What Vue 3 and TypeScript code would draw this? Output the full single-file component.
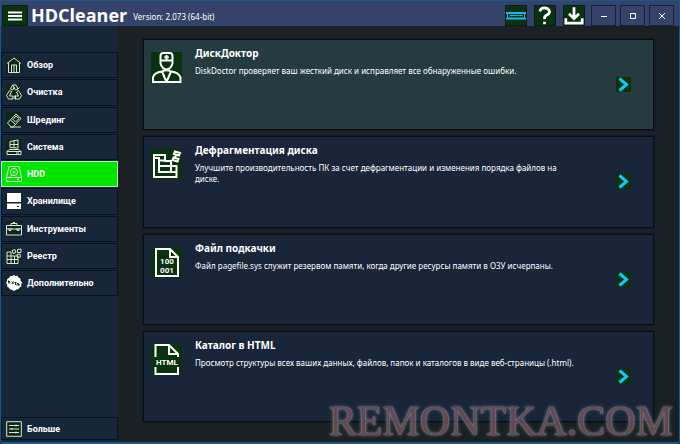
<script setup lang="ts">
import { ref } from 'vue'

interface Shape {
  d: string
  solid?: boolean
  cut?: boolean
}

interface NavItem {
  id: string
  label: string
  icon: Shape[]
}

interface Tool {
  title: string
  text: string
  icon: Shape[]
  caption?: string[]
}

const navItems: NavItem[] = [
  { id: 'overview', label: 'Обзор', icon: [{ d: 'M1 6.500 8 1l7 5.500M2.500 6v9.500h11V6M5.500 15V8h5v7M8 8v7' }] },
  {
    id: 'clean',
    label: 'Очистка',
    icon: [
      { d: 'M4.500 5 6.500 1h3.500l2 4-2.500 1L8 3.500 6.800 6ZM6.500 1l2 3M12 5l1.500-1.500M12.500 6.500l3 5-2 3.500H9.500v-3h3L10.500 8ZM3.500 6.500l2 1-2 4.500H7v3H2.500L.5 11.500ZM9.500 11l-1.500 2.500 1.500 2' },
    ],
  },
  { id: 'shred', label: 'Шрединг', icon: [{ d: 'M1.500 11 10 2l5 4.500L7 15H5ZM4.500 8l5 4.500M4 15h11' }, { d: 'M10 4l3 2.500L9.500 10 7 7.500Z' }] },
  { id: 'system', label: 'Система', icon: [{ d: 'M4 2.500 12 1v8L4 8.500ZM8 1.500v7.500M4 5.500h8M3 10.500h10l2 2V15.500H1v-3ZM1 12.500h14M10 14h3' }] },
  {
    id: 'hdd',
    label: 'HDD',
    icon: [{ d: 'M3 .5h10l2.500 11v4H.5v-4ZM.5 11.500h15M8 2.500a3.500 3.500 0 1 0 .1 0M8 5.500a.7.7 0 1 0 .1 0M6 9l-2 1.500M11 13.500h2' }],
  },
  { id: 'storage', label: 'Хранилище', icon: [{ d: 'M1 0h14v9H1ZM1 10.500h14V16H1Z', solid: true }, { d: 'M11 13.500h2', cut: true }] },
  {
    id: 'tools',
    label: 'Инструменты',
    icon: [{ d: 'M.5 4.500h15V14H.5ZM5 4.500V2.500h6v2M.5 8h15M3 7v2.500h2V7M11 7v2.500h2V7M7 1.500h2' }],
  },
  {
    id: 'registry',
    label: 'Реестр',
    icon: [{ d: 'M1 4h4v4h7v7.500H1ZM1 8h4v7.500M1 11.500h11M8.500 8v7.500M6 2.500l3-1 1 3-3 1ZM11.500 1.500l3.500-.5v3.500h-3.500ZM11 6.500l3-.5.500 3-3 .5Z' }],
  },
  {
    id: 'extra',
    label: 'Дополнительно',
    icon: [
      { d: 'M8 0l1.500 1 2-.2 1 1.700 2 1v2L16 7.500 15.200 9.500l.1 2-1.800 1-1 1.800-2 .1L8 16l-2-1.200-2-.3-1-1.700-1.800-1v-2L0 8l1-2 .2-2 1.800-1L4.200 1 6 1Z', solid: true },
      { d: 'M2.500 5.500v2.500h2M2.500 6.500h1.500M5.500 6.500l2 2.500M7.500 6.500l-1.500 2.500M8.500 7.500h2M9.500 7.500v2.500M11 10.500V8.500h1.500v2M13 11V9', cut: true },
    ],
  },
]

const moreIcon: Shape[] = [{ d: 'M.7.7h14.600v14.600H.7ZM3 4.500h10M3 8h10M3 11.500h10M10 3.500v2M6 7v2M10 10.500v2' }]

const tools: Tool[] = [
  {
    title: 'ДискДоктор',
    text: 'DiskDoctor проверяет ваш жесткий диск и исправляет все обнаруженные ошибки.',
    icon: [
      { d: 'M9.500 8.500V4Q9.500 1 12.500 1h6q3 0 3 3v4.500ZM9.500 8.500v3Q11 17 15.500 17.500 20 17 21.500 11.500v-3M15.500 3v4.500M13.300 5.200h4.500' },
      { d: 'M2 30v-4.500Q3 20.500 11 19.500q4.500-2.500 9 0 8 1 9.500 6V30ZM11 19.500 15.500 30 20 19.500' },
    ],
  },
  {
    title: 'Дефрагментация диска',
    text: 'Улучшите производительность ПК за счет дефрагментации и изменения порядка файлов на диске.',
    icon: [
      { d: 'M3 6h11v6h6v5h5.500v11H3ZM3 9h5v2.500h6M8 11.500V23h17.500M8 17h12v6' },
      { d: 'M24 2.500l5 1.500-1 2.500-5-1.500ZM25 6.500l-1 2M22.500 8.500l5 1.500-1 2.500-5-1.500Z' },
    ],
  },
  {
    title: 'Файл подкачки',
    text: 'Файл pagefile.sys служит резервом памяти, когда другие ресурсы памяти в ОЗУ исчерпаны.',
    icon: [{ d: 'M5 2h14l8 8v19H5ZM19 2v8h8' }],
    caption: ['100', '001'],
  },
  {
    title: 'Каталог в HTML',
    text: 'Просмотр структуры всех ваших данных, файлов, папок и каталогов в виде веб-страницы (.html).',
    icon: [{ d: 'M4.500 13V1H18l9 9v3M18 1v9h9M4.500 23v7H27v-7' }],
    caption: ['HTML'],
  },
]

const active = ref('hdd')
</script>

<template>
  <div class="window">
    <header class="titlebar">
      <button class="tile menu" type="button" aria-label="Меню">
        <svg viewBox="0 0 16 10"><path d="M1 1.500h14M1 5h14M1 8.500h14" /></svg>
      </button>
      <h1>HDCleaner</h1>
      <span class="version">Version: 2.073 (64-bit)</span>
      <div class="actions">
        <button class="tile" type="button" aria-label="Панель">
          <svg class="bar-icon" viewBox="0 0 20 19"><path class="frame" d="M0 7h20M0 12.500h20" /><path d="M1.500 7v6M18.500 7v6M4 9.500h8M12.500 9.500h4" /></svg>
        </button>
        <button class="tile" type="button" aria-label="Справка">
          <svg class="bold" viewBox="0 0 22 20"><path d="M5.500 5.500Q6 1.500 10.500 1.500T16 5.500Q16 8 13 9.500T10.500 14M10.500 17v2.500" /></svg>
        </button>
        <button class="tile" type="button" aria-label="Загрузить">
          <svg class="bold" viewBox="0 0 22 20"><path d="M11 1v12M5.500 8 11 13.500 16.500 8M2 13v5.500h18V13" /></svg>
        </button>
      </div>
      <div class="controls">
        <button class="control" type="button" aria-label="Свернуть">
          <svg viewBox="0 0 10 10"><path d="M2 5.500h6" /></svg>
        </button>
        <button class="control" type="button" aria-label="Развернуть">
          <svg viewBox="0 0 10 10"><path d="M2.500 2.500h5v5h-5Z" /></svg>
        </button>
        <button class="control" type="button" aria-label="Закрыть">
          <svg viewBox="0 0 10 10"><path d="M2 2l6 6M8 2 2 8" /></svg>
        </button>
      </div>
    </header>

    <div class="body">
      <aside class="sidebar">
        <nav class="nav">
          <button
            v-for="item in navItems"
            :key="item.id"
            type="button"
            class="nav-item"
            :class="{ active: active === item.id }"
            @click="active = item.id"
          >
            <svg viewBox="0 0 16 16">
              <path v-for="(s, i) in item.icon" :key="i" :d="s.d" :class="{ solid: s.solid, cut: s.cut }" />
            </svg>
            <span>{{ item.label }}</span>
          </button>
        </nav>
        <button type="button" class="nav-item more">
          <svg viewBox="0 0 16 16">
            <path v-for="(s, i) in moreIcon" :key="i" :d="s.d" />
          </svg>
          <span>Больше</span>
        </button>
      </aside>

      <main class="tools">
        <button v-for="(tool, n) in tools" :key="tool.title" type="button" class="card" :class="{ current: n === 0 }">
          <svg class="card-icon" viewBox="0 0 31 31">
            <path v-for="(s, i) in tool.icon" :key="i" :d="s.d" />
            <template v-if="tool.caption">
              <text
                v-for="(line, i) in tool.caption"
                :key="line"
                x="16"
                :y="tool.caption.length > 1 ? 17 + i * 9 : 21"
              >{{ line }}</text>
            </template>
          </svg>
          <span class="copy">
            <strong>{{ tool.title }}</strong>
            <span>{{ tool.text }}</span>
          </span>
          <svg class="arrow" viewBox="0 0 15 15"><path d="M3.500 1.500 10.500 7.500 3.500 13.500" /></svg>
        </button>
      </main>
    </div>
    <div class="watermark">REMONTKA.COM</div>
  </div>
</template>

<style>
body {
  margin: 0;
  background: #1a2024;
}
</style>

<style scoped>
.window {
  position: relative;
  box-sizing: border-box;
  display: flex;
  flex-direction: column;
  min-height: 100vh;
  overflow: hidden;
  border: 1px solid #1b588a;
  border-bottom-width: 2px;
  border-radius: 0 0 4px 4px;
  background: #1a2024;
  color: #fff;
  font-family: "Noto Sans", "Open Sans", sans-serif;
}

button {
  box-sizing: border-box;
  margin: 0;
  padding: 0;
  border: 1px solid #0a1220;
  border-radius: 0;
  background: none;
  color: inherit;
  font: inherit;
  text-align: left;
}

svg {
  display: block;
  flex: none;
  fill: none;
  stroke: #fff;
}

.titlebar {
  display: flex;
  align-items: flex-end;
  height: 25px;
  flex: none;
  padding: 0 5px 0 1px;
  background: #35436a;
}

h1 {
  margin: 0 0 0 3px;
  font-family: "Open Sans", "Noto Sans", sans-serif;
  font-size: 18px;
  line-height: 21px;
  font-weight: 700;
}

.version {
  margin-left: 6px;
  font-size: 8px;
  line-height: 18px;
}

.actions {
  display: flex;
  gap: 7px;
  margin-left: auto;
}

.controls {
  display: flex;
  gap: 4px;
  margin-left: 6px;
}

.tile {
  width: 22px;
  height: 21px;
  border-color: #071e1a;
  background: #0b320f;
}

.tile svg {
  width: 100%;
  height: 100%;
}

.tile .bar-icon {
  stroke: #0cb9f5;
  stroke-width: 1;
}

.tile .bar-icon .frame {
  stroke-width: 2;
}

.tile .bold {
  stroke-width: 3;
}

.menu {
  width: 26px;
  padding: 0 4px;
}

.menu svg {
  height: 10px;
  stroke-width: 2;
}

.control {
  display: flex;
  align-items: center;
  justify-content: center;
  width: 25px;
  height: 21px;
  border-color: #17233b;
}

.control svg {
  width: 10px;
  height: 10px;
}

.body {
  display: flex;
  flex: 1;
  min-height: 0;
}

.sidebar {
  box-sizing: border-box;
  display: flex;
  flex: none;
  flex-direction: column;
  justify-content: space-between;
  width: 117px;
  padding: 26px 0 2px;
  background: #182639;
}

.nav {
  display: grid;
  grid-auto-rows: 1fr;
  gap: 1px;
  height: 63%;
}

.nav-item {
  display: flex;
  align-items: center;
  gap: 5px;
  width: 100%;
  padding-left: 4px;
  font-family: Roboto, "Noto Sans", sans-serif;
  font-size: 9px;
  font-weight: 700;
  line-height: 14px;
}

.nav-item svg {
  width: 16px;
  height: 16px;
  background: #0b2818;
  stroke: #dce6dd;
}

.nav-item .solid {
  fill: #fff;
  stroke: none;
}

.nav-item .cut {
  stroke: #123324;
}

.nav-item.active {
  border-color: #b5eeb5;
  background: #00e400;
}

.nav-item.active svg {
  background: none;
}

.nav-item.more {
  height: 23px;
}

.tools {
  display: grid;
  flex: 1;
  grid-auto-rows: 1fr;
  gap: 6px;
  padding: 13px 25px 20px 25px;
}

.card {
  display: flex;
  align-items: flex-start;
  padding: 0 22px 0 7px;
  border-color: #050e15;
  outline: 1px solid #10191f;
  background: #192539;
}

.card.current {
  background: #253b40;
}

.card-icon {
  width: 31px;
  height: 31px;
  margin-top: 12px;
  background: #0b320f;
  stroke-width: 2;
}

.card-icon text {
  fill: #fff;
  stroke: none;
  font-family: Roboto, "Noto Sans", sans-serif;
  font-size: 8px;
  font-weight: 700;
  text-anchor: middle;
}

.copy {
  display: flex;
  flex: 1;
  flex-direction: column;
  gap: 4px;
  max-width: 384px;
  margin: 5px auto 0 13px;
  font-size: 8px;
  line-height: 11px;
}

.copy strong {
  font-size: 10px;
  line-height: 16px;
}

.arrow {
  align-self: center;
  width: 15px;
  height: 15px;
  background: #0b320f;
}

.arrow path {
  stroke: #14c4fa;
  stroke-width: 3;
}

.watermark {
  position: absolute;
  right: 6px;
  bottom: 0;
  color: #74545c;
  font-family: "Liberation Serif", serif;
  font-size: 42px;
  line-height: 42px;
  opacity: 0.8;
  pointer-events: none;
  text-shadow: 0 0 1px #a5a8ad, 0 0 2px #9094a0, 0 0 4px #777c84;
}
</style>
